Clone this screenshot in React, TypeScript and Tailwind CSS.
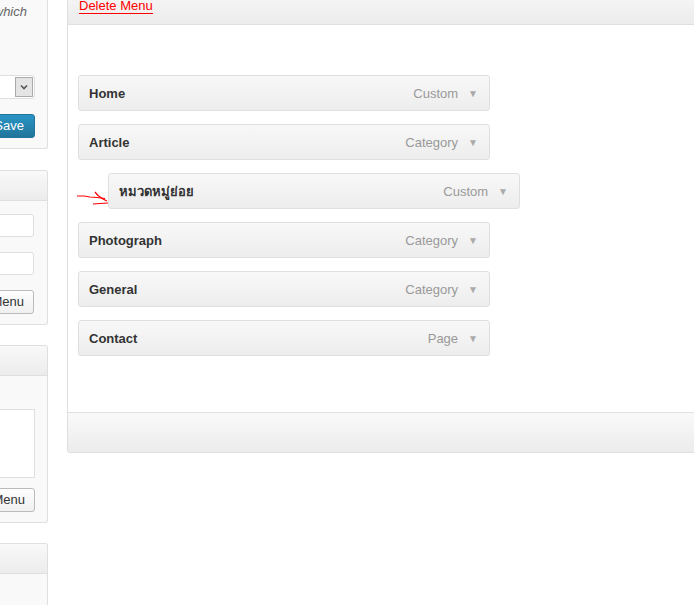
import React from "react";

const font = { fontFamily: '"Liberation Sans", Arial, "Noto Sans", sans-serif' };

function Header() {
  return (
    <div className="h-[30px] border-b border-[#dfdfdf] bg-gradient-to-b from-[#f9f9f9] to-[#ececec] rounded-tr-[3px]" />
  );
}

function Item({ title, type, indent }: { title: string; type: string; indent?: boolean }) {
  return (
    <div
      className={`h-[36px] w-[412px] flex items-center justify-between border border-[#dfdfdf] rounded-[3px] bg-gradient-to-b from-[#f8f8f8] to-[#ededed] pl-[10px] pr-[11px] pt-[1px] ${
        indent ? "ml-[30px]" : ""
      }`}
    >
      <span className="text-[13px] font-bold text-[#333]">{title}</span>
      <span className="flex items-center gap-[10px] text-[13px] text-[#999]">
        {type}
        <span className="text-[10px] text-[#aaa] leading-none">▼</span>
      </span>
    </div>
  );
}

export default function App() {
  return (
    <div className="w-[694px] h-[605px] overflow-hidden bg-white flex" style={font}>
      {/* left column */}
      <div className="w-[48px] shrink-0 flex flex-col">
        {/* panel 1 */}
        <div className="h-[149px] border border-t-0 border-l-0 border-[#dfdfdf] rounded-br-[3px] bg-[#f9f9f9] flex flex-col items-end pr-[12px]">
          <div className="mt-[4px] mr-[8px] text-[13px] italic text-[#666] leading-[16px] whitespace-nowrap">which</div>
          <div className="mt-[55px] w-[50px] mr-0 h-[24px] bg-white border border-[#dfdfdf] rounded-[3px] flex items-center justify-end pr-[1px] self-end">
            <div className="w-[18px] h-[20px] bg-[#e4e4e4] border border-[#aaa] flex items-center justify-center">
              <svg width="8" height="6" viewBox="0 0 8 6">
                <path d="M1 1.5 L4 4.5 L7 1.5" fill="none" stroke="#555" strokeWidth="1.6" />
              </svg>
            </div>
          </div>
          <div className="mt-[15px] h-[24px] w-[50px] rounded-[3px] border border-[#21759b] bg-gradient-to-b from-[#2a95c5] to-[#21759b] text-white text-[13px] flex items-center justify-end pr-[10px]">
            Save
          </div>
        </div>

        {/* panel 2 */}
        <div className="mt-[21px] h-[155px] border border-l-0 border-[#dfdfdf] rounded-r-[3px] bg-[#f9f9f9] flex flex-col">
          <Header />
          <div className="flex flex-col items-end pr-[13px]">
            <div className="mt-[13px] h-[23px] w-[50px] bg-white border border-[#dfdfdf] rounded-[3px]" />
            <div className="mt-[15px] h-[23px] w-[50px] bg-white border border-[#dfdfdf] rounded-[3px]" />
            <div className="mt-[15px] h-[24px] w-[60px] rounded-[3px] border border-[#bbb] bg-gradient-to-b from-[#fefefe] to-[#f0f0f0] text-[13px] text-[#333] flex items-center justify-end pr-[9px]">
              Menu
            </div>
          </div>
        </div>

        {/* panel 3 */}
        <div className="mt-[20px] h-[178px] border border-l-0 border-[#dfdfdf] rounded-r-[3px] bg-[#f9f9f9] flex flex-col">
          <Header />
          <div className="flex flex-col items-end pr-[12px]">
            <div className="mt-[33px] h-[69px] w-[50px] bg-white border border-[#dfdfdf]" />
            <div className="mt-[10px] h-[24px] w-[60px] rounded-[3px] border border-[#bbb] bg-gradient-to-b from-[#fefefe] to-[#f0f0f0] text-[13px] text-[#333] flex items-center justify-end pr-[9px]">
              Menu
            </div>
          </div>
        </div>

        {/* panel 4 */}
        <div className="mt-[20px] flex-1 border border-l-0 border-b-0 border-[#dfdfdf] rounded-tr-[3px] bg-[#f9f9f9] flex flex-col">
          <Header />
        </div>
      </div>

      {/* main panel */}
      <div className="ml-[19px] w-[700px] shrink-0 self-start h-[453px] border border-t-0 border-r-0 border-[#dfdfdf] rounded-bl-[3px] flex flex-col">
        <div className="h-[25px] border-b border-[#dfdfdf] bg-gradient-to-b from-[#f4f4f4] to-[#ececec] pl-[11px]">
          <span className="text-[13px] text-[#ff0000] leading-[13px] inline-block border-b border-[#ff0000] pb-[1px] -mt-[1px] align-top">
            Delete Menu
          </span>
        </div>
        <div className="relative flex-1 bg-white pt-[50px] pl-[10px] flex flex-col gap-[13px]">
          <Item title="Home" type="Custom" />
          <Item title="Article" type="Category" />
          <Item title="หมวดหมู่ย่อย" type="Custom" indent />
          <Item title="Photograph" type="Category" />
          <Item title="General" type="Category" />
          <Item title="Contact" type="Page" />
          <svg className="absolute left-[9px] top-[165px]" width="45" height="20" viewBox="0 0 45 20">
            <path d="M0 6 L7 6 L13 7 L20 7.5 L28 8.5" fill="none" stroke="#f00" strokeWidth="1.2" />
            <path d="M18 2 L21 5.5 L26 9 L30 11" fill="none" stroke="#f00" strokeWidth="1.2" />
            <path d="M16 14 L23 13.5 L31 13" fill="none" stroke="#f00" strokeWidth="1.2" />
          </svg>
        </div>
        <div className="h-[40px] border-t border-[#dfdfdf] bg-gradient-to-b from-[#f9f9f9] to-[#ececec]" />
      </div>
    </div>
  );
}
